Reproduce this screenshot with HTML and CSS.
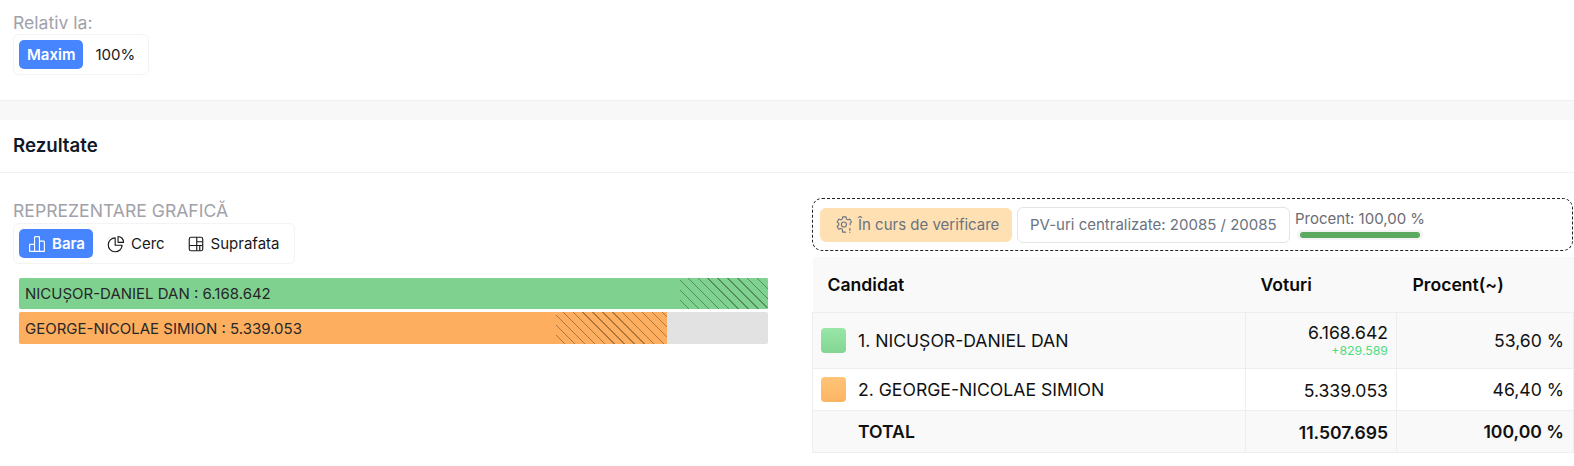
FILE: index.html
```html
<!DOCTYPE html>
<html lang="ro">
<head>
<meta charset="utf-8">
<title>Rezultate</title>
<link rel="stylesheet" href="styles.css">
</head>
<body>
<section class="top">
  <div class="label">Relativ la:</div>
  <div class="seg">
    <button class="seg-btn active">Maxim</button>
    <button class="seg-btn">100%</button>
  </div>
</section>
<div class="band"></div>
<header class="res-head"><h2>Rezultate</h2></header>
<main class="grid">
  <div class="left">
    <div class="label caps">REPREZENTARE GRAFICĂ</div>
    <div class="seg">
      <button class="seg-btn active icon-btn">
        <svg class="ic" viewBox="1 1 22 22" fill="none" stroke="currentColor" stroke-width="1.4" stroke-linejoin="round"><path d="M3 12.500h6v8.500H3zM9 4a1 1 0 0 1 1-1h4a1 1 0 0 1 1 1v17H9zM15 8.500h5a1 1 0 0 1 1 1V21h-6z"/></svg>
        Bara</button>
      <button class="seg-btn icon-btn">
        <svg class="ic" viewBox="1 1 22 22" fill="none" stroke="currentColor" stroke-width="1.4" stroke-linecap="round" stroke-linejoin="round"><path d="M11 4.500a8.500 8.500 0 1 0 8.500 9H11z"/><path d="M14.500 2.800a6.800 6.800 0 0 1 6.700 7.200h-6.700z"/></svg>
        Cerc</button>
      <button class="seg-btn icon-btn">
        <svg class="ic" viewBox="0 0 24 24" fill="none" stroke="currentColor" stroke-width="1.5" stroke-linejoin="round"><rect x="3" y="3" width="18" height="18" rx="2.500"/><path d="M3 14h18M13 3v18M17 14v7M13 9h8"/></svg>
        Suprafata</button>
    </div>
    <div class="bars">
      <div class="bar">
        <div class="fill green bar-full"><span>NICUȘOR-DANIEL DAN : 6.168.642</span><i class="hatch hatch-a"></i></div>
      </div>
      <div class="bar">
        <div class="fill orange bar-short"><span>GEORGE-NICOLAE SIMION : 5.339.053</span><i class="hatch hatch-b"></i></div>
      </div>
    </div>
  </div>
  <div class="right">
    <div class="status">
      <div class="pill warn">
        <svg class="ic gear" viewBox="2 2 20 20" fill="none" stroke="currentColor" stroke-width="1.300" stroke-linecap="round" stroke-linejoin="round"><path d="M19.800 12.500c.1-.6 0-1.300-.1-1.900l1.700-1.600-2-3.400-2.300 1a8 8 0 0 0-1.700-1L15 3h-4l-.4 2.600a8 8 0 0 0-1.700 1l-2.400-1-2 3.400 2 1.600a8 8 0 0 0 0 2l-2 1.600 2 3.400 2.400-1a8 8 0 0 0 1.700 1L11 21h3.500"/><circle cx="12.500" cy="12" r="3"/><path d="M19.500 16.500v2.500M19.500 21.300v.1"/></svg>
        În curs de verificare
      </div>
      <div class="pill outline">PV-uri centralizate: 20085 / 20085</div>
      <div class="progress">
        <div class="progress-label">Procent: 100,00 %</div>
        <div class="track"><div class="track-fill"></div></div>
      </div>
    </div>
    <table class="tbl">
      <thead>
        <tr><th class="c1">Candidat</th><th class="c2">Voturi</th><th class="c3">Procent(~)</th></tr>
      </thead>
      <tbody>
        <tr class="r1 shade">
          <td><div class="cand"><i class="sw sw-green"></i>1. NICUȘOR-DANIEL DAN</div></td>
          <td class="num"><div class="votes-up">6.168.642</div><div class="delta">+829.589</div></td>
          <td class="num pct">53,60 %</td>
        </tr>
        <tr class="r2">
          <td><div class="cand"><i class="sw sw-orange"></i>2. GEORGE-NICOLAE SIMION</div></td>
          <td class="num low">5.339.053</td>
          <td class="num pct">46,40 %</td>
        </tr>
        <tr class="r3 shade total">
          <td class="low-half"><div class="cand total-name">TOTAL</div></td>
          <td class="num low">11.507.695</td>
          <td class="num pct">100,00 %</td>
        </tr>
      </tbody>
    </table>
  </div>
</main>
</body>
</html>
```
FILE: styles.css
```css
* { box-sizing: border-box; }
html, body { margin: 0; padding: 0; }
body { font-family: Inter, "Liberation Sans", sans-serif; background: #fff; color: #18181b; width: 1574px; height: 466px; overflow: hidden; }
.top { height: 101px; padding: 11px 13px 0; border-bottom: 1px solid #f0f0f0; }
.label { font-size: 17.6px; line-height: 23px; color: #a1a1aa; }
.seg { display: inline-flex; align-items: center; gap: 4px; padding: 5px; border: 1px solid #f3f3f5; border-radius: 6px; background: #fff; }
.seg-btn { font-family: inherit; font-size: 15px; font-weight: 400; line-height: 20px; height: 29px; padding: 0 8px; border: 0; border-radius: 5px; background: transparent; color: #18181b; display: inline-flex; align-items: center; gap: 6px; }
.seg-btn.active { background: #4785ff; color: #fff; font-weight: 600; }
.seg-btn.icon-btn { padding: 0 9px; }
.seg-btn.icon-btn.active { padding-right: 8px; }
.active + .icon-btn { margin-left: 1px; }
.ic { width: 18px; height: 18px; flex: none; }
.band { height: 19px; background: #f8f8f8; }
.res-head { height: 53px; display: flex; align-items: center; padding-left: 13px; border-bottom: 1px solid #f0f0f0; }
.res-head h2 { margin: 0; font-size: 18.7px; line-height: 24px; font-weight: 600; color: #111827; }
.grid { display: grid; grid-template-columns: 812px 761px; }
.left { padding: 26px 0 0 13px; }
.caps { line-height: 24px; }
.bars { margin: 14px 0 0 6px; width: 749px; display: flex; flex-direction: column; gap: 3px; }
.bar { height: 31px; background: #e2e2e2; border-radius: 2px; overflow: hidden; }
.bar + .bar { height: 32px; }
.fill { height: 100%; position: relative; display: flex; align-items: center; padding-left: 6px; font-size: 15px; color: #27272a; }
.fill span { position: relative; z-index: 1; }
.green { background: #7fd18f; }
.orange { background: #fdae5e; }
.bar-full { width: 100%; }
.bar-short { width: 648px; }
.hatch { position: absolute; top: 0; bottom: 0; right: 0; background: repeating-linear-gradient(45deg, transparent 0 6px, rgba(0, 0, 0, .32) 6px 7px); }
.hatch-a { width: 88px; }
.hatch-b { width: 111px; }
.right { padding-top: 25px; }
.status { height: 53px; border: 1px dashed #222; border-radius: 10px; display: flex; align-items: center; gap: 5px; padding: 0 7px 0 7px; }
.pill { font-size: 15px; color: #6b7280; height: 36px; display: flex; align-items: center; border-radius: 6px; }
.warn { background: #ffe0b2; height: 34px; width: 192px; padding-left: 15px; gap: 6px; }
.gear { width: 17px; height: 17px; }
.outline { width: 273px; padding-left: 12px; background: #fff; border: 1px solid #e4e4e7; }
.progress { width: 135px; align-self: flex-start; padding-top: 10px; }
.progress-label { font-size: 15px; line-height: 20px; color: #6b6b73; }
.track { margin: 1px 0 0 2px; width: 126px; height: 10px; padding: 2px 3px; background: #f3f3f4; border-radius: 5px; }
.track-fill { height: 6px; border-radius: 3px; background: #5aa95f; }
.tbl { width: 761px; margin-top: 6px; border-collapse: collapse; table-layout: fixed; font-size: 17.6px; color: #111; }
.c1 { width: 433px; }
.c2 { width: 151px; }
.c3 { width: 177px; }
th { height: 55px; background: #f9f9f9; text-align: left; font-size: 17.6px; font-weight: 600; color: #0a0a0a; padding: 0 0 0 15px; border-bottom: 1px solid #eee; }
th.c3 { padding-left: 16px; }
td { padding: 0; border: 1px solid #eee; }
.r1 td { height: 56px; }
.r2 td { height: 42px; }
.r3 td { height: 42px; }
.shade td { background: #f9f9f9; }
.cand { display: flex; align-items: center; gap: 12px; padding-left: 8px; }
.sw { width: 25px; height: 25px; border-radius: 4px; flex: none; }
.sw-green { background: linear-gradient(#9ae6a8, #82d693); }
.sw-orange { background: linear-gradient(#ffc478, #fdb462); }
.num { text-align: right; padding-right: 8px; }
.num.pct { padding-right: 9px; }
.num.low { padding-top: 3px; }
td.low-half { padding-top: 1px; }
.votes-up { line-height: 22px; }
.delta { font-size: 12.3px; line-height: 14px; color: #4ade80; }
.total { font-weight: 600; }
.total-name { padding-left: 45px; }
```
